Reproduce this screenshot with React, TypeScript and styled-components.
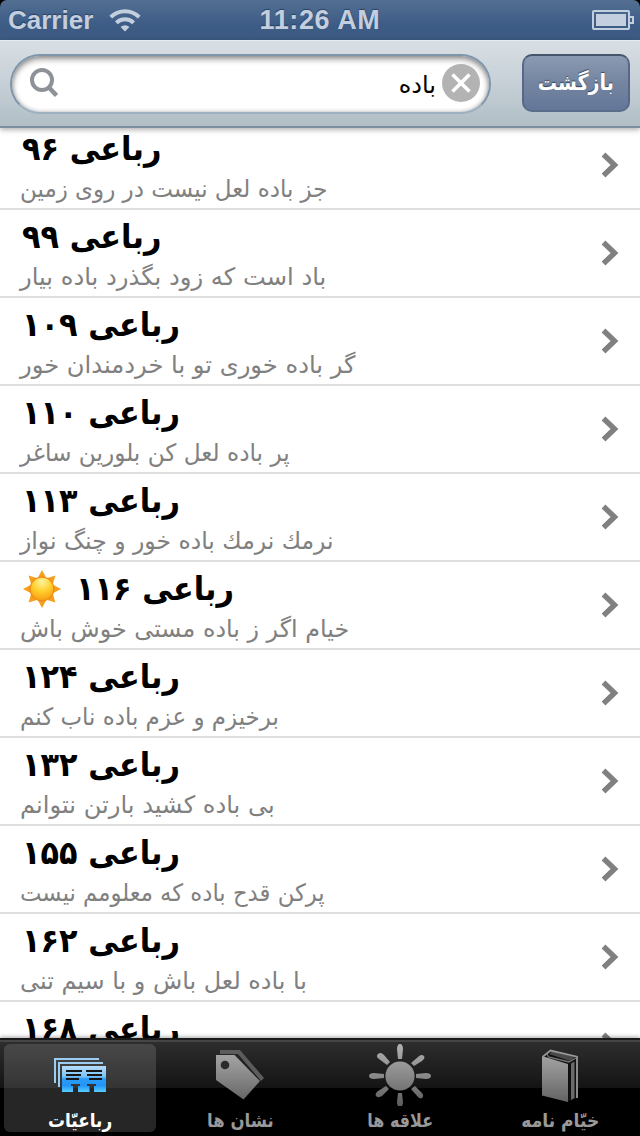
import React from 'react';
import styled, { createGlobalStyle } from 'styled-components';

const Global = createGlobalStyle`
  * { box-sizing: border-box; }
  html, body { margin: 0; padding: 0; background: #000; }
  body { font-family: 'DejaVu Sans', 'Liberation Sans', sans-serif; }
`;

const Screen = styled.div`
  width: 640px;
  height: 1136px;
  display: flex;
  flex-direction: column;
  overflow: hidden;
  background: #000;
`;

const StatusBar = styled.header`
  flex: none;
  height: 40px;
  display: grid;
  grid-template-columns: 1fr auto 1fr;
  align-items: center;
  padding: 0 6px 0 8px;
  border-radius: 7px 7px 0 0;
  background: linear-gradient(#536f92, #3d5c86 62%, #3c5a80);
  color: #c3cfdf;
  font: bold 26px/40px 'Liberation Sans', sans-serif;
  text-shadow: 0 -1px 1px rgba(20, 40, 70, 0.6);
`;

const StatusSide = styled.div<{ $end?: boolean }>`
  display: flex;
  align-items: center;
  gap: 16px;
  justify-content: ${(p) => (p.$end ? 'flex-end' : 'flex-start')};
`;

const Clock = styled.span`
  padding-right: 2px;
  font-size: 27px;
  letter-spacing: 0.6px;
`;

const SearchBar = styled.div`
  flex: none;
  position: relative;
  z-index: 1;
  height: 88px;
  display: flex;
  align-items: flex-start;
  justify-content: space-between;
  padding: 13px 10px 0;
  background: linear-gradient(#d8dfe4, #c8d1d8 45%, #b1bec6);
  border-top: 1px solid #e8edf0;
  border-bottom: 2px solid #7c8f9f;
  box-shadow: 0 2px 5px rgba(0, 0, 0, 0.3);
`;

const SearchField = styled.div`
  width: 481px;
  height: 60px;
  display: flex;
  align-items: center;
  padding: 0 9px 2px 18px;
  border: 2px solid #7f95aa;
  border-bottom-color: #9db0c0;
  border-radius: 30px;
  background: #fff;
  box-shadow: inset 0 3px 6px rgba(0, 0, 0, 0.42), inset 0 0 4px rgba(0, 0, 0, 0.2);
`;

const Query = styled.span`
  flex: 1;
  direction: rtl;
  padding: 3px 6px 0 0;
  color: #000;
  font-size: 24px;
  line-height: 40px;
`;

const BackButton = styled.button`
  width: 108px;
  height: 58px;
  padding: 0;
  display: flex;
  align-items: center;
  justify-content: center;
  border: 2px solid #50617d;
  border-color: #46546c #56678a #5c6d8b;
  border-radius: 10px;
  background: linear-gradient(#8b9ab2, #7485a1 50%, #647798);
  color: #fff;
  font: bold 22px/50px 'DejaVu Sans', sans-serif;
  text-shadow: 0 -1px 1px rgba(30, 40, 60, 0.7);
  white-space: nowrap;
`;

/* Condenses a label horizontally while its letters stay joined. */
const Condensed = styled.span<{ $scale: number }>`
  display: inline-block;
  transform: scaleX(${(p) => p.$scale});
`;

const List = styled.main`
  flex: 1;
  min-height: 0;
  overflow: hidden;
  background: #fff;
`;

const Rows = styled.ul`
  margin: -6px 0 0;
  padding: 0;
  list-style: none;
`;

const Row = styled.li`
  height: 88px;
  display: flex;
  align-items: center;
  justify-content: space-between;
  padding: 0 20px;
  border-bottom: 2px solid #dfdfdf;
`;

const RowText = styled.div`
  display: flex;
  flex-direction: column;
  align-items: flex-start;
  padding-top: 1px;
`;

const Title = styled.div`
  display: flex;
  flex-direction: row-reverse;
  align-items: center;
  justify-content: flex-end;
  gap: 14px;
  height: 46px;
  padding-left: 2px;
  color: #000;
  font-size: 33px;
  font-weight: bold;
  line-height: 46px;
  white-space: nowrap;
`;

const TitleText = styled.span`
  direction: rtl;
  transform: scaleX(0.92);
  transform-origin: left;
`;

const Verse = styled.div<{ $scale: number }>`
  direction: rtl;
  height: 34px;
  color: #808080;
  font-size: 24px;
  line-height: 34px;
  white-space: nowrap;
  transform: scaleX(${(p) => p.$scale});
  transform-origin: left;
`;

const TabBar = styled.nav`
  flex: none;
  position: relative;
  height: 98px;
  display: grid;
  grid-template-columns: repeat(4, 1fr);
  padding: 4px 0;
  background: linear-gradient(#1a1a1a 0 2px, #454545 2px 4px, #2d2d2d 4px, #141414 50px, #000 50px);
  box-shadow: 0 -1px 4px rgba(0, 0, 0, 0.35);
`;

const Tab = styled.div<{ $active?: boolean }>`
  display: flex;
  flex-direction: column;
  align-items: center;
  justify-content: space-between;
  margin: 2px 4px 0;
  border-radius: 6px;
  background: ${(p) => (p.$active ? 'linear-gradient(#484848, #343434 44px, #262626 44px)' : 'none')};
  color: ${(p) => (p.$active ? '#fff' : '#999')};
  direction: rtl;
  font-size: 19px;
  font-weight: bold;
  line-height: 24px;
  white-space: nowrap;
`;

const Chevron = () => (
  <svg width="20" height="28" viewBox="0 0 20 28">
    <path d="M3.500 3.500 14.500 14 3.500 24.500" fill="none" stroke="#808080" strokeWidth="5.400" />
  </svg>
);

const spokes = Array.from({ length: 8 }, (_, i) => i * 45);

const SunEmoji = () => (
  <svg width="40" height="40" viewBox="-20 -20 40 40">
    <defs>
      <radialGradient id="sunFill" cx="0.5" cy="0.2" r="0.8">
        <stop offset="0" stopColor="#fff3a0" />
        <stop offset="0.5" stopColor="#ffd12e" />
        <stop offset="1" stopColor="#f79a10" />
      </radialGradient>
    </defs>
    {spokes.map((a) => (
      <path key={a} d="M-4-11.500 0-19 4-11.500Z" fill="#f5a01c" transform={`rotate(${a})`} />
    ))}
    <circle r="11.800" fill="url(#sunFill)" stroke="#ec8a16" strokeWidth="1.200" />
  </svg>
);

const WifiIcon = () => (
  <svg width="32" height="24" viewBox="0 0 32 24">
    <g fill="none" stroke="#c3cfdf" strokeWidth="4">
      <path d="M1.800 9.200a20 20 0 0 1 28.400 0" />
      <path d="M7.400 14.800a12.200 12.200 0 0 1 17.200 0" />
    </g>
    <path d="M11.600 19a6.200 6.200 0 0 1 8.800 0L16 23.600Z" fill="#c3cfdf" />
  </svg>
);

const BatteryIcon = () => (
  <svg width="42" height="20" viewBox="0 0 42 20">
    <rect x="1" y="1" width="36" height="18" rx="1" fill="none" stroke="#c3cfdf" strokeWidth="2" />
    <rect x="4" y="4" width="30" height="12" fill="#c3cfdf" />
    <path d="M38 7h3v6h-3" fill="none" stroke="#c3cfdf" strokeWidth="2" />
  </svg>
);

const SearchIcon = () => (
  <svg width="30" height="32" viewBox="0 0 30 32">
    <circle cx="12" cy="13" r="10" fill="none" stroke="#8d9299" strokeWidth="4" />
    <path d="m18.500 20 8 8.500" stroke="#8d9299" strokeWidth="4.600" />
  </svg>
);

const ClearIcon = () => (
  <svg width="38" height="38" viewBox="0 0 38 38">
    <circle cx="19" cy="19" r="19" fill="#b3b3b3" />
    <path d="m10.500 10.500 17 17M27.500 10.500l-17 17" stroke="#fff" strokeWidth="3.600" />
  </svg>
);

const grey = (
  <defs>
    <linearGradient id="tabGrey" gradientUnits="userSpaceOnUse" x1="0" y1="0" x2="0" y2="62">
      <stop offset="0" stopColor="#b0b0b0" />
      <stop offset="0.5" stopColor="#8a8a8a" />
      <stop offset="1" stopColor="#5c5c5c" />
    </linearGradient>
  </defs>
);

const CardsIcon = () => (
  <svg width="64" height="62" viewBox="0 0 64 62">
    <defs>
      <linearGradient id="cardBlue" x1="0" y1="0" x2="0" y2="1">
        <stop offset="0" stopColor="#b5ddfa" />
        <stop offset="0.4" stopColor="#7cc3f8" />
        <stop offset="0.5" stopColor="#2a9cf8" />
        <stop offset="0.75" stopColor="#2196f8" />
        <stop offset="1" stopColor="#5accff" />
      </linearGradient>
    </defs>
    <path d="M7 39V15h44M11 43V19h44" fill="none" stroke="#9bcdf3" strokeWidth="2" />
    <path d="M14 22h44v26H46v-6h2v-2h-9v2h2.500v6H30v-6h2v-2h-9v2h2v6H14Z" fill="url(#cardBlue)" />
    <path d="M18 27h16M18 31h15M18 35h13M38 27h16M39 31h15M41 35h13" stroke="#171717" strokeWidth="1.800" />
  </svg>
);

const TagsIcon = () => (
  <svg width="64" height="62" viewBox="0 0 64 62">
    {grey}
    <path d="M12 6h20l24 28-3 3L30 10H12Z" fill="#5c5c5c" />
    <path d="M8 11h18.500L52 37 35.500 55.500 8 36Z" fill="url(#tabGrey)" />
    <circle cx="17" cy="21" r="4.300" fill="#2b2b2b" />
  </svg>
);

const SunIcon = () => (
  <svg width="64" height="62" viewBox="0 0 64 62">
    {grey}
    <g fill="url(#tabGrey)">
      <circle cx="32" cy="32" r="14.600" />
      <path d="M32 0c2 0 3 2 3 5l-1 10h-4L29 5c0-3 1-5 3-5ZM32 63c2 0 3-2 3-5l-1-9h-4l-1 9c0 3 1 5 3 5ZM1 32c0-2 2-3 5-3l10 1v4L6 35c-3 0-5-1-5-3ZM63 32c0-2-2-3-5-3l-10 1v4l10 1c3 0 5-1 5-3ZM10 10c2-2 4-1 6 1l6 7-3 3-8-6c-2-2-3-3-1-5ZM56 12c-2-2-4-1-6 1l-7 6 3 3 8-5c2-2 3-3 2-5ZM8 52c2 2 4 1 6 0l7-7-3-3-8 5c-2 2-3 3-2 5ZM54 54c2-2 1-4-1-6l-6-6-4 3 7 8c1 1 3 2 4 1Z" />
    </g>
  </svg>
);

const BookIcon = () => (
  <svg width="64" height="62" viewBox="0 0 64 62">
    {grey}
    <path d="m14 12 8-6 28 6v42l-11 4-25-7Z" fill="#101010" />
    <path d="m21 10 3-2.500 23 5.500-5 4Z" fill="#4a4a4a" />
    <path d="m15 12.500 7.500-6L49 12.700V54" fill="none" stroke="#999" strokeWidth="1.800" />
    <path d="m19 10 1.500 3L41 18l7-4" fill="none" stroke="#777" strokeWidth="1.300" />
    <path d="m43 19.500 3.500-2V54L43 56Z" fill="#6b6b6b" />
    <path d="m14 12 26 8v38l-26-6.500Z" fill="url(#tabGrey)" />
  </svg>
);

const poems = [
  { n: '۹۶', verse: 'جز باده لعل نیست در روی زمین', scale: 0.957 },
  { n: '۹۹', verse: 'باد است که زود بگذرد باده بیار', scale: 1.008 },
  { n: '۱۰۹', verse: 'گر باده خوری تو با خردمندان خور', scale: 1.008 },
  { n: '۱۱۰', verse: 'پر باده لعل کن بلورین ساغر', scale: 0.967 },
  { n: '۱۱۳', verse: 'نرمك نرمك باده خور و چنگ نواز', scale: 0.979 },
  { n: '۱۱۶', verse: 'خیام اگر ز باده مستی خوش باش', scale: 0.993, favourite: true },
  { n: '۱۲۴', verse: 'برخیزم و عزم باده ناب کنم', scale: 0.956 },
  { n: '۱۳۲', verse: 'بی باده کشید بارتن نتوانم', scale: 1.006 },
  { n: '۱۵۵', verse: 'پرکن قدح باده که معلومم نیست', scale: 0.948 },
  { n: '۱۶۲', verse: 'با باده لعل باش و با سیم تنی', scale: 0.997 },
  { n: '۱۶۸', verse: '', scale: 1 },
];

const tabs = [
  { label: 'رباعیّات', icon: <CardsIcon />, scale: 0.89, active: true },
  { label: 'نشان ها', icon: <TagsIcon />, scale: 0.87 },
  { label: 'علاقه ها', icon: <SunIcon />, scale: 0.84 },
  { label: 'خیّام نامه', icon: <BookIcon />, scale: 0.9 },
];

export default function App() {
  return (
    <Screen lang="fa">
      <Global />
      <StatusBar>
        <StatusSide>
          <span>Carrier</span>
          <WifiIcon />
        </StatusSide>
        <Clock>11:26 AM</Clock>
        <StatusSide $end>
          <BatteryIcon />
        </StatusSide>
      </StatusBar>
      <SearchBar>
        <SearchField>
          <SearchIcon />
          <Query>باده</Query>
          <ClearIcon />
        </SearchField>
        <BackButton>
          <Condensed $scale={0.87}>بازگشت</Condensed>
        </BackButton>
      </SearchBar>
      <List>
        <Rows>
          {poems.map((p) => (
            <Row key={p.n}>
              <RowText>
                <Title>
                  <TitleText>رباعی {p.n}</TitleText>
                  {p.favourite && <SunEmoji />}
                </Title>
                <Verse $scale={p.scale}>{p.verse}</Verse>
              </RowText>
              <Chevron />
            </Row>
          ))}
        </Rows>
      </List>
      <TabBar>
        {tabs.map((t) => (
          <Tab key={t.label} $active={t.active}>
            {t.icon}
            <Condensed $scale={t.scale}>{t.label}</Condensed>
          </Tab>
        ))}
      </TabBar>
    </Screen>
  );
}
